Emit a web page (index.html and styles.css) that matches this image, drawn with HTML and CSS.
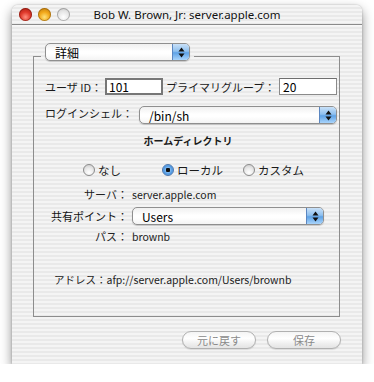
FILE: index.html
```html
<!DOCTYPE html>
<html lang="ja">
<head>
<meta charset="utf-8">
<link rel="stylesheet" href="styles.css">
</head>
<body>
<div class="window">
  <div class="titlebar">
    <div class="lights">
      <span class="light red"></span>
      <span class="light yellow"></span>
      <span class="light gray"></span>
    </div>
    <div class="title">Bob W. Brown, Jr: server.apple.com</div>
    <div></div>
  </div>

  <fieldset class="group">
    <legend class="legend">
      <div class="popup legend-popup">
        <span class="val">詳細</span>
        <span class="arrows"><svg width="7" height="11" viewBox="0 0 7 11"><path d="M3.5 0.5 L6.5 4.5 L0.5 4.5 Z M3.5 10.5 L6.5 6.5 L0.5 6.5 Z" fill="#111"/></svg></span>
      </div>
    </legend>
    <div class="content">
      <div class="row row1">
        <span class="lbl lbl-uid">ユーザ ID：</span>
        <span class="field field-focus">101</span>
        <span class="lbl lbl-group">プライマリグループ：</span>
        <span class="field">20</span>
      </div>
      <div class="row row2">
        <span class="lbl lbl-shell">ログインシェル：</span>
        <div class="popup shell-popup">
          <span class="val">/bin/sh</span>
          <span class="arrows"><svg width="7" height="11" viewBox="0 0 7 11"><path d="M3.5 0.5 L6.5 4.5 L0.5 4.5 Z M3.5 10.5 L6.5 6.5 L0.5 6.5 Z" fill="#111"/></svg></span>
        </div>
      </div>
      <div class="heading">ホームディレクトリ</div>
      <div class="radios">
        <span class="radio-item r-none"><span class="radio"></span>なし</span>
        <span class="radio-item r-local"><span class="radio on"></span>ローカル</span>
        <span class="radio-item r-custom"><span class="radio"></span>カスタム</span>
      </div>
      <div class="info">
        <span class="ilbl">サーバ：</span>
        <span class="ival">server.apple.com</span>
        <span class="ilbl ilbl-share">共有ポイント：</span>
        <div class="popup share-popup">
          <span class="val">Users</span>
          <span class="arrows"><svg width="7" height="11" viewBox="0 0 7 11"><path d="M3.5 0.5 L6.5 4.5 L0.5 4.5 Z M3.5 10.5 L6.5 6.5 L0.5 6.5 Z" fill="#111"/></svg></span>
        </div>
        <span class="ilbl ilbl-path">パス：</span>
        <span class="ival ival-path">brownb</span>
      </div>
      <div class="address">アドレス：afp://server.apple.com/Users/brownb</div>
    </div>
  </fieldset>

  <div class="buttons">
    <span class="btn">元に戻す</span>
    <span class="btn">保存</span>
  </div>
</div>
</body>
</html>
```

FILE: styles.css
```css
* { box-sizing: border-box; }
html, body { margin: 0; padding: 0; background: #fff; }
body {
  font-family: "Noto Sans CJK JP", "Noto Sans", sans-serif;
  font-size: 11px;
  color: #1a1a1a;
}
.window {
  margin: 5px 0 0 12px;
  width: 350px;
  height: 359px;
  border-radius: 6px 6px 0 0;
  background: repeating-linear-gradient(to bottom, #f4f4f4 0 2px, #e9e9e9 2px 4px);
  box-shadow: 0 5px 12px rgba(0,0,0,0.45), 0 0 2px rgba(0,0,0,0.25);
  display: flex;
  flex-direction: column;
}
.titlebar {
  height: 20px;
  border-bottom: 1px solid #8a8a8a;
  display: grid;
  grid-template-columns: 1fr auto 1fr;
  align-items: center;
  box-shadow: 0 1px 0 #f8f8f8;
}
.lights { display: flex; gap: 6px; padding-left: 7px; }
.light {
  width: 13px; height: 13px; border-radius: 50%;
  display: block;
}
.red {
  background: radial-gradient(circle at 50% 70%, #ff8f7f 0, #e0392b 45%, #9e1b12 100%);
  box-shadow: inset 0 0 0 1px rgba(120,20,10,0.6);
}
.yellow {
  background: radial-gradient(circle at 50% 70%, #ffe27a 0, #f2a81a 45%, #b5730a 100%);
  box-shadow: inset 0 0 0 1px rgba(140,90,10,0.6);
}
.gray {
  background: radial-gradient(circle at 50% 70%, #ffffff 0, #e6e6e6 50%, #c4c4c4 100%);
  box-shadow: inset 0 0 0 1px rgba(120,120,120,0.55);
}
.title {
  font-family: "Noto Sans", "Noto Sans CJK JP", sans-serif;
  font-size: 11.5px;
  color: #111;
  white-space: nowrap;
}

.group {
  margin: 18px 0 0 21px;
  width: 307px;
  height: 274px;
  border: 1px solid #8d8d8d;
  padding: 0;
  min-inline-size: 0;
}
.legend {
  margin: 0 0 0 7px;
  padding: 0 4px 8px;
}
.popup {
  display: flex;
  align-items: stretch;
  height: 18px;
  border: 1px solid #8f8f8f;
  border-radius: 5px;
  background: linear-gradient(to bottom, #f0f0f0 0, #ffffff 45%, #ffffff 60%, #f4f4f4 100%);
  box-shadow: 0 1px 1px rgba(0,0,0,0.18);
  overflow: hidden;
}
.popup .val {
  flex: 1;
  display: flex;
  align-items: center;
  padding-left: 9px;
  font-size: 12px;
  color: #000;
}
.popup .arrows {
  width: 17px;
  display: flex;
  align-items: center;
  justify-content: center;
  border-left: 1px solid #5b86c0;
  background: linear-gradient(to bottom, #c9e1f8 0, #8fc0ef 45%, #5ea2e6 55%, #a9d4fb 100%);
}
.legend-popup { width: 145px; }

.content { padding-left: 11px; }
.row { display: flex; align-items: center; }
.row1 { margin-top: 9px; height: 17px; }
.lbl { font-size: 11px; white-space: nowrap; }
.lbl-uid { width: 60px; }
.lbl-group { width: 113px; margin-left: 3px; }
.field {
  width: 58px;
  height: 17px;
  background: #fff;
  border: 1px solid #8a8a8a;
  border-top-color: #6e6e6e;
  font-size: 12px;
  line-height: 15px;
  padding-left: 3px;
  color: #000;
}
.field-focus { border: 2px solid #777; line-height: 13px; padding-left: 2px; }
.row2 { margin-top: 11px; align-items: flex-start; }
.lbl-shell { width: 94px; margin-top: -1px; }
.shell-popup { width: 198px; }

.heading {
  margin-top: 10px;
  margin-right: 8px;
  text-align: center;
  font-weight: bold;
  font-size: 10px;
  line-height: 13px;
}
.radios {
  display: flex;
  align-items: center;
  margin-top: 16px;
  height: 14px;
  font-size: 11.5px;
}
.radio-item { display: flex; align-items: center; gap: 3px; white-space: nowrap; }
.r-none { margin-left: 38px; }
.r-local { margin-left: 41px; }
.r-custom { margin-left: 20px; }
.radio {
  width: 12px; height: 12px; border-radius: 50%;
  display: block;
  border: 1px solid #8b8b8b;
  background: radial-gradient(circle at 50% 75%, #ffffff 0, #eeeeee 40%, #c9c9c9 100%);
}
.radio.on {
  border-color: #4d77ad;
  background: radial-gradient(circle at 50% 50%, #111 0, #111 2px, #7fb7ee 2.5px, #4f98e2 60%, #a6d2fa 100%);
}

.info {
  display: grid;
  width: 300px;
  grid-template-columns: 94px 192px;
  column-gap: 4px;
  align-items: center;
  margin-top: 9px;
  margin-left: -11px;
}
.ilbl { text-align: right; font-size: 11px; white-space: nowrap; color: #222; }
.ival { font-size: 10.5px; color: #222; }
.ilbl-share { margin-top: 5px; color: #111; }
.share-popup { margin-top: 5px; }
.ilbl-path, .ival-path { margin-top: 3px; }

.address {
  margin-top: 28px;
  margin-left: 9px;
  font-size: 10.5px;
  color: #222;
}

.buttons {
  display: flex;
  justify-content: flex-end;
  gap: 11px;
  margin: 14px 21px 0 0;
}
.btn {
  width: 74px;
  height: 18px;
  border: 1px solid #b0b0b0;
  border-radius: 9px;
  background: linear-gradient(to bottom, #f4f4f4 0, #ffffff 40%, #f0f0f0 70%, #e4e4e4 100%);
  color: #8a8a8a;
  font-size: 11px;
  display: flex;
  align-items: center;
  justify-content: center;
  box-shadow: 0 1px 1px rgba(0,0,0,0.1);
}
```
